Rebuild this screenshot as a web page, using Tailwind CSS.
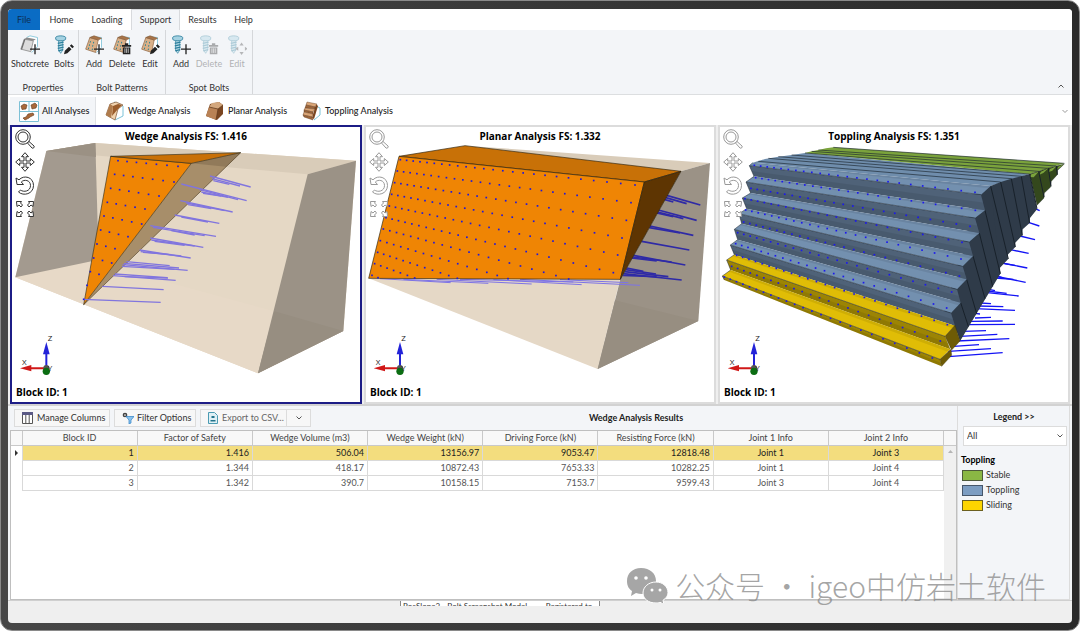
<!DOCTYPE html>
<html lang="en">
<head>
    <meta charset="UTF-8">
    <meta name="viewport" content="width=device-width, initial-scale=1.0">
    <script src="https://cdn.jsdelivr.net/npm/@tailwindcss/browser@4"></script>
    <title>RocSlope3 - Bolt Screenshot Model</title>
</head>
<body class="bg-white font-['Lato','Noto_Sans_CJK_SC',sans-serif] text-[9px] leading-[12px] text-[#333]">

<!-- ICONS -->
<svg class="hidden">
    <symbol id="i-block" viewBox="0 0 24 24">
        <path d="M9 2l12 1v12l-6 6" fill="#fff" stroke="#7cc3d8"/>
        <path d="M7 3l10 3-3 15L2 17z" fill="#d9b088" stroke="#8a5f3c" stroke-width=".8"/>
        <path d="M7 3l5-2 9 3-4 2z" fill="#a87448" stroke="#8a5f3c" stroke-width=".8"/>
        <path d="M7 8l1 .3M11 9l1 .3M6 12l1 .3M10 13l1 .3M5 16l1 .3M9.500 17l1 .3" stroke="#1e7f92" stroke-width="1.800"/>
    </symbol>
    <symbol id="i-shotcrete" viewBox="0 0 24 24">
        <path d="M8 3l4-2 9 2v11l-7 7" fill="#fff" stroke="#7cc3d8"/>
        <path d="M5 5l11 2-3 13L1 17z" fill="#dcdcdc" stroke="#777" stroke-width=".8"/>
        <path d="M5 5l3-2 11 2-3 2z" fill="#8a8a8a"/>
        <path d="M5 5L1 17l1.500.5L6.500 5.500z" fill="#6d6d6d"/>
    </symbol>
    <symbol id="i-bolt" viewBox="0 0 24 24">
        <path d="M2 3c0-1 3-2 6-2s6 1 6 2v2c0 1-3 2-6 2S2 6 2 5z" fill="#a5d2e2" stroke="#2c7f9d"/>
        <path d="M5.500 7h5v11L8 22l-2.500-4z" fill="#bfe0ea" stroke="#2c7f9d" stroke-width=".8"/>
        <path d="M4.500 10l7-1.500M4.500 13l7-1.500M4.500 16l7-1.500M5 19l6-1.500" stroke="#2c7f9d" stroke-width="1.400"/>
    </symbol>
    <symbol id="i-plus" viewBox="0 0 24 24"><path d="M18 11v12M12 17h12" stroke="#222" stroke-width="1.600"/></symbol>
    <symbol id="i-trash" viewBox="0 0 24 24">
        <path d="M12 12h11v2H12zM15.500 10h4v2h-4zM13 15h9v8h-9z" fill="#222"/>
        <path d="M15.500 16v5.500M17.500 16v5.500M19.500 16v5.500" stroke="#fff" stroke-width=".8"/>
    </symbol>
    <symbol id="i-pencil" viewBox="0 0 24 24"><path d="M12 23l1-4 5-5 3 3-5 5zM19 13l2-2 3 3-2 2z" fill="#222"/></symbol>
    <symbol id="i-arrows" viewBox="0 0 24 24">
        <path d="M17.500 9l2.500 3.500h-5zM17.500 24l2.500-3.500h-5zM10 16.500l3.500-2.500v5zM25 16.500L21.500 14v5z" fill="#444"/>
    </symbol>

    <symbol id="i-zoom" viewBox="0 0 20 20">
        <g fill="#fff" stroke="currentColor"><circle cx="8" cy="8" r="7.300"/><circle cx="8" cy="8" r="5"/>
        <path d="M12.500 14l1.500-1.500 5 4.500c1 1-1 3-2 2z"/></g>
    </symbol>
    <symbol id="i-move" viewBox="0 0 20 20">
        <path fill="#fff" stroke="currentColor" d="M10 .7l3.500 4H11V9h4.300V6.500l4 3.500-4 3.500V11H11v4.300h2.500l-3.500 4-3.500-4H9V11H4.700v2.500L.7 10l4-3.500V9H9V4.700H6.500z"/>
    </symbol>
    <symbol id="i-rotate" viewBox="0 0 20 20">
        <path fill="#fff" stroke="currentColor" d="M1 3l1 6.500h6.500L6.300 7C9 4 15.500 5 15.500 10.500c0 6-7 7-10 4.500L3.500 17c5 4.500 15 2 15-6.500C18.500 2 9-.5 4 4.800z"/>
    </symbol>
    <symbol id="i-fit" viewBox="0 0 20 20">
        <g fill="#fff" stroke="currentColor">
            <path d="M1.500 3.500h5l-1 1.500 2 2-1.500 2-2-2-2 1.500z"/>
            <path d="M18.500 3.500h-5l1 1.500-2 2 1.500 2 2-2 2 1.500z"/>
            <path d="M1.500 18.500h5l-1-1.500 2-2-1.500-2-2 2-2-1.500z"/>
            <path d="M18.500 18.500h-5l1-1.500-2-2 1.500-2 2 2 2-1.500z"/>
        </g>
    </symbol>
    <symbol id="i-axes" viewBox="0 0 130 150">
        <path d="M84 112V50" stroke="#2323d8" stroke-width="6"/><path d="M84 24l10 37H74z" fill="#2323d8"/>
        <path d="M82 103H36" stroke="#d01818" stroke-width="6"/><path d="M5 103l34-10v19z" fill="#d01818"/>
        <circle cx="84" cy="102" r="9" fill="#555"/><circle cx="84" cy="112" r="11" fill="#0b6d12"/>
        <g fill="#222" font-size="24"><text x="88" y="20">Z</text><text x="11" y="93">X</text><text x="88" y="112">Y</text></g>
    </symbol>
</svg>

<div class="min-h-screen flex flex-col rounded-xl bg-linear-to-r from-[#474747] to-[#2a2a2a] border border-[#8a8a8a] px-[7px] pt-2 pb-[7px]">
<div class="grow flex flex-col rounded-sm overflow-hidden bg-[#efefef]">

    <!-- RIBBON -->
    <nav class="h-[21px] flex bg-white">
        <button class="w-8 bg-[#0a6cc4] text-[#0c2f55]">File</button>
        <button class="w-[43px]">Home</button>
        <button class="w-[48px]">Loading</button>
        <button class="w-[49px] bg-[#f3f5f8] border border-b-0 border-[#d8dadd]">Support</button>
        <button class="w-[45px]">Results</button>
        <button class="w-[37px]">Help</button>
    </nav>
    <div class="flex h-[65px] bg-[#f3f5f8] border-b border-[#dcdee0]">
        <section class="flex flex-col justify-between border-r border-[#d5d7da] px-px pt-[5px]">
            <div class="flex">
                <button class="w-[42px] flex flex-col items-center gap-[3px]">
                    <svg class="size-5"><use href="#i-shotcrete"/><use href="#i-plus"/></svg>Shotcrete</button>
                <button class="w-[26px] flex flex-col items-center gap-[3px]">
                    <svg class="size-5"><use href="#i-bolt"/><use href="#i-pencil"/></svg>Bolts</button>
            </div>
            <h2 class="text-center">Properties</h2>
        </section>
        <section class="flex flex-col justify-between border-r border-[#d5d7da] px-px pt-[5px]">
            <div class="flex">
                <button class="w-7 flex flex-col items-center gap-[3px]">
                    <svg class="size-5"><use href="#i-block"/><use href="#i-plus"/></svg>Add</button>
                <button class="w-7 flex flex-col items-center gap-[3px]">
                    <svg class="size-5"><use href="#i-block"/><use href="#i-trash"/></svg>Delete</button>
                <button class="w-7 flex flex-col items-center gap-[3px]">
                    <svg class="size-5"><use href="#i-block"/><use href="#i-pencil"/></svg>Edit</button>
            </div>
            <h2 class="text-center">Bolt Patterns</h2>
        </section>
        <section class="flex flex-col justify-between border-r border-[#d5d7da] px-px pt-[5px]">
            <div class="flex">
                <button class="w-7 flex flex-col items-center gap-[3px]">
                    <svg class="size-5"><use href="#i-bolt"/><use href="#i-plus"/></svg>Add</button>
                <button disabled class="w-7 flex flex-col items-center gap-[3px] opacity-35">
                    <svg class="size-5"><use href="#i-bolt"/><use href="#i-trash"/></svg>Delete</button>
                <button disabled class="w-7 flex flex-col items-center gap-[3px] opacity-35">
                    <svg class="size-5"><use href="#i-bolt"/><use href="#i-arrows"/></svg>Edit</button>
            </div>
            <h2 class="text-center">Spot Bolts</h2>
        </section>
        <button class="ml-auto self-end mr-2 mb-1" aria-label="Collapse ribbon">
            <svg class="w-[6px] h-2" viewBox="0 0 6 8" fill="none" stroke="#555"><path d="M.5 5.500L3 3l2.500 2.500"/></svg></button>
    </div>

    <!-- ANALYSIS TABS -->
    <div class="flex items-stretch h-[30px] bg-white pl-[2px] pt-px font-medium text-[#222]">
        <button class="w-[86px] flex items-center gap-[3px] pl-[9px] mt-px bg-[#f3f5f8] border-r border-[#dfe1e4] whitespace-nowrap">
            <svg class="w-5 h-[21px]" viewBox="0 0 20 21">
                <path d="M.5.5h19v20H.500zM.5 10.500h19M10 .5v10" fill="#fff" stroke="#7cc0d6"/>
                <path d="M2 5l3-2 3 1-1 4-4 .5zM12 4l4-2 2 2-1 3-4 1zM4 17l3-1 2-3 5-1 1 2-4 2-1 1-4 2z" fill="#a9683a" stroke="#5f3a1e" stroke-width=".6"/>
            </svg>All Analyses</button>
        <button class="w-[100px] flex items-center gap-1 pl-[9px] whitespace-nowrap">
            <svg class="w-[19px] h-5" viewBox="0 0 19 20">
                <path d="M9 1l9 4v10l-8 4" fill="#fff" stroke="#7cc3d8"/>
                <path d="M5 3l6-2 7 3-5 4-3 11-9-5z" fill="#f0d2ae" stroke="#7b5332" stroke-width=".7"/>
                <path d="M5 3l3 2-2 12-5-3z" fill="#b07c4d"/><path d="M8 5l5-2 4 1-4 4-6 7z" fill="#9a5c2b"/>
            </svg>Wedge Analysis</button>
        <button class="w-[97px] flex items-center gap-1 pl-[9px] whitespace-nowrap">
            <svg class="w-[19px] h-5" viewBox="0 0 19 20">
                <path d="M5 3l9-2 4 3v9l-6 6-11-4z" fill="#7a4621"/><path d="M4 6l9 2-2 11L1 15z" fill="#b98255"/>
                <path d="M4 6l3-4 7-1 4 3-5 4z" fill="#d3a77d"/><path d="M13 8L11 19M13 8l5-4M4 6l9 2" stroke="#5f3a1e" stroke-width=".7"/>
            </svg>Planar Analysis</button>
        <button class="w-[106px] flex items-center gap-1 pl-[9px] whitespace-nowrap">
            <svg class="w-[19px] h-5" viewBox="0 0 19 20">
                <path d="M14 5l4 2v7l-6 5" fill="#fff" stroke="#7cc3d8"/>
                <path d="M14 3l2 2-4 13-2-1z" fill="#7a4621"/>
                <g fill="#d9a577" stroke="#5f3a1e" stroke-width=".4"><path d="M5 1l10 2-2 3-9-2z"/><path d="M4 4l9 2v2L3 7z" fill="#9c663b"/>
                <path d="M3 7l10 1-2 3-9-2z"/><path d="M2 9l9 2v2l-9-2z" fill="#9c663b"/><path d="M2 11l9 2-1 3-9-2z"/><path d="M1 14l9 2 1 3-9-3z" fill="#9c663b"/></g>
            </svg>Toppling Analysis</button>
        <button class="ml-auto mr-1" aria-label="More tabs">
            <svg class="w-[6px] h-2" viewBox="0 0 6 8" fill="none" stroke="#999"><path d="M.5 3L3 5.500 5.500 3"/></svg></button>
    </div>

    <!-- VIEWPORTS -->
    <main class="grid grid-cols-3 gap-[2px] px-[2px] bg-[#efefef] border-b-2 border-[#d2d2d2] font-['Open_Sans',sans-serif]">
        <section class="relative bg-white border-2 border-[#1c1c86]">
            <svg class="block w-full" viewBox="12 15 1044 825">
                <path d="M22 466L115 87l147-24 782 53-38 511-256 127z" fill="#e5d8c5"/>
                <path d="M115 87l147-24 782 53-145 41z" fill="#d9ccb9"/>
                <path d="M250 418l549 150-49 186L22 466z" fill="#e7d9c7"/>
                <path d="M22 466L115 87l147-24 10 350z" fill="#a39a8f"/>
                <path d="M115 87l147-24 2 42z" fill="#9b9184"/>
                <path d="M899 157l145-41-38 511-256 127z" fill="#9b9286"/>
                <path d="M799 568l207 59-256 127z" fill="#978e81"/>
                <path d="M550 124L698 92 227 548z" fill="#a78e6a"/>
                <path d="M550 124l148-32-44 42z" fill="#917a5a"/>
                <g stroke="#3a3320" stroke-width="2"><path d="M308 103l242 21-323 424z" fill="#ef8504"/><path d="M308 103l390-11-148 32z" fill="#c97006"/></g>
                <path d="M698 92L227 548" stroke="#57492f" stroke-width="2"/>
                <g id="wedge-bolts" stroke="#8175de" stroke-width="4"></g>
                <g id="wedge-dots" fill="#1b17e0"></g>
                <use href="#i-axes" x="31" y="636" width="130" height="150"/>
            </svg>
            <h2 class="absolute inset-x-0 top-[3px] text-center text-[10px] font-bold text-black">Wedge Analysis FS: 1.416</h2>
            <div class="absolute left-[3px] top-[2px] flex flex-col gap-[3px] text-[#333]">
                <button aria-label="Zoom"><svg class="block size-5"><use href="#i-zoom"/></svg></button>
                <button aria-label="Pan"><svg class="block size-5"><use href="#i-move"/></svg></button>
                <button aria-label="Rotate"><svg class="block size-5"><use href="#i-rotate"/></svg></button>
                <button aria-label="Zoom extents"><svg class="block size-5"><use href="#i-fit"/></svg></button>
            </div>
            <p class="absolute left-1 bottom-1 text-[10px] font-bold text-black">Block ID: 1</p>
        </section>
        <section class="relative bg-white border-2 border-[#dcdcdc]">
            <svg class="block w-full" viewBox="18 15 1044 825">
                <path d="M315 71l735 52-87 25z" fill="#d9ccb9"/>
                <path d="M26 469h755l-68 272z" fill="#e5d8c6"/>
                <path d="M963 148l87-25-35 474-302 144 68-269z" fill="#9b9286"/>
                <path d="M765 535l250 62-302 144z" fill="#978e81"/>
                <g id="planar-bolts-back" stroke="#7d73e6" stroke-width="3"></g>
                <g id="planar-bolts" stroke="#2f2aa6" stroke-width="5"></g>
                <g stroke="#2e2410" stroke-width="2">
                    <path d="M117 103l198-32 648 77-110 32z" fill="#c87107"/>
                    <path d="M117 103l736 77-72 292-755-3z" fill="#ef8504"/>
                    <path d="M853 180l110-32-182 324z" fill="#5e3502"/>
                </g>
                <g id="planar-dots" fill="#1b17e0"></g>
                <use href="#i-axes" x="36" y="636" width="130" height="150"/>
            </svg>
            <h2 class="absolute inset-x-0 top-[3px] text-center text-[10px] font-bold text-black">Planar Analysis FS: 1.332</h2>
            <div class="absolute left-[3px] top-[2px] flex flex-col gap-[3px] text-[#999]">
                <button aria-label="Zoom"><svg class="block size-5"><use href="#i-zoom"/></svg></button>
                <button aria-label="Pan"><svg class="block size-5"><use href="#i-move"/></svg></button>
                <button aria-label="Rotate"><svg class="block size-5"><use href="#i-rotate"/></svg></button>
                <button aria-label="Zoom extents"><svg class="block size-5"><use href="#i-fit"/></svg></button>
            </div>
            <p class="absolute left-1 bottom-1 text-[10px] font-bold text-black">Block ID: 1</p>
        </section>
        <section class="relative bg-white border-2 border-[#dcdcdc]">
            <svg class="block w-full" viewBox="15 15 1044 825">
                <g id="toppling-bolts" stroke="#1414f5" stroke-width="4"></g>
                <path d="M113 122l37-11 40-7 40-5 40-6 674 63-117 36z" fill="#6f8dac"/>
                <path d="M270 93l20-5 20-4 23-5 22-3 693 48-104 32z" fill="#7ba33c"/>
                <g id="toppling-strips" stroke="#1d2730" stroke-width="2" fill="none"></g>
                <!-- side faces -->
                <path d="M827 192l30-12 32-10 30-7 25-7 22 106-21 26-1 15-21 19-1 18-21 22v13l-23 23 1 14-24 25 1 18-23 25v13l-24 22 1 15-25 22v23l-24 25-1 13-26 28-45-67-2-17 29-31-10-40 29-30-11-38 29-32-12-40 28-30-13-46 29-22-12-47z" fill="#2f3b49"/>
                <path d="M827 192L798 218 812 265 780 288 793 333 762 360 774 402 743 433 755 472 726 502 737 542 708 573 720 611 735 658 856 455z" fill="#2f3b49"/>
                <path d="M944 156l27-8 29-10 24-6 24-6-20 19-1 13-18 20-2 17-19 18-1 15-21 22z" fill="#34481d" stroke="#1d2730" stroke-width="1"/>
                <path d="M944 165l5-8 22-8-15 17zM973 158l5-9 22-10-15 14zM1001 150l4-9 19-8-12 13zM1026 143l4-9 18-9z" fill="#7ba33c"/>
                <g id="toppling-edges" stroke="#18212a" stroke-width="3"></g>
                <g id="toppling-layers"></g>
                <path d="M690 643l30-33 15 47-25 27z" fill="#6e5b05" stroke="#2c2503" stroke-width="1"/>
                <path d="M675 712l33-30 2 18-30 33z" fill="#6e5b05" stroke="#2c2503" stroke-width="1"/>
                <g id="toppling-dots" fill="#1b17f0"></g>
                <use href="#i-axes" x="33" y="636" width="130" height="150"/>
            </svg>
            <h2 class="absolute inset-x-0 top-[3px] text-center text-[10px] font-bold text-black">Toppling Analysis FS: 1.351</h2>
            <div class="absolute left-[3px] top-[2px] flex flex-col gap-[3px] text-[#999]">
                <button aria-label="Zoom"><svg class="block size-5"><use href="#i-zoom"/></svg></button>
                <button aria-label="Pan"><svg class="block size-5"><use href="#i-move"/></svg></button>
                <button aria-label="Rotate"><svg class="block size-5"><use href="#i-rotate"/></svg></button>
                <button aria-label="Zoom extents"><svg class="block size-5"><use href="#i-fit"/></svg></button>
            </div>
            <p class="absolute left-1 bottom-1 text-[10px] font-bold text-black">Block ID: 1</p>
        </section>
    </main>

    <!-- RESULTS -->
    <div class="grow flex px-[2px] bg-[#f3f5f8]">
        <div class="grow flex flex-col">
            <div class="flex items-center gap-1 h-6 pl-1">
                <button class="h-[18px] w-24 shrink-0 flex items-center gap-1 pl-[7px] border border-[#dcdcdc] bg-[#f7f7f7] whitespace-nowrap">
                    <svg class="w-[11px] h-3 shrink-0" viewBox="0 0 11 12"><path d="M.5.500h10v11H.500zM3.800 0v12M7.200 0v12" fill="#fff" stroke="#555"/><path d="M0 0h11v3H0z" fill="#5b5a86"/></svg>
                    Manage Columns</button>
                <button class="h-[18px] w-[82px] shrink-0 flex items-center gap-[3px] pl-[7px] border border-[#dcdcdc] bg-[#f7f7f7] whitespace-nowrap">
                    <svg class="size-3 shrink-0" viewBox="0 0 12 12"><circle cx="3" cy="3" r="1.600" fill="none" stroke="#444" stroke-width="1.500"/><path d="M4 4.500h8L9 8v3l-2 1V8z" fill="#8cc4ee" stroke="#2d7fc4" stroke-width=".7"/></svg>
                    Filter Options</button>
                <div class="flex shrink-0 border border-[#dcdcdc] bg-[#f7f7f7] h-[18px] text-[#666]">
                    <button class="w-[85px] flex items-center gap-1 pl-[7px] whitespace-nowrap">
                        <svg class="w-[10px] h-3 shrink-0" viewBox="0 0 10 12"><path d="M.5.500h6l3 3v8h-9z" fill="#dff0f5" stroke="#4b9bb2"/><path d="M3.500 4h3v2h-3zM2.500 8h5v1.500h-5z" fill="#23748c"/></svg>
                        Export to CSV...</button>
                    <button class="w-6 flex items-center justify-center border-l border-[#dcdcdc]" aria-label="Export options">
                        <svg class="w-[6px] h-2" viewBox="0 0 6 8" fill="none" stroke="#555"><path d="M.5 2.500L3 5l2.500-2.500"/></svg></button>
                </div>
                <h2 class="grow text-center font-bold text-[#222]">Wedge Analysis Results</h2>
            </div>
            <div class="grow flex bg-white border border-[#bfbfbf]">
                <div class="grow">
                    <table class="w-full table-fixed border-collapse leading-[14px] text-[#555]">
                        <thead>
                            <tr class="h-[14px] bg-[#f8f8f8] text-[#444]">
                                <th class="w-[11px] p-0 border-r border-b border-[#c9c9c9]"></th>
                                <th class="p-0 font-normal border-r border-b border-[#c9c9c9]">Block ID</th>
                                <th class="p-0 font-normal border-r border-b border-[#c9c9c9]">Factor of Safety</th>
                                <th class="p-0 font-normal border-r border-b border-[#c9c9c9]">Wedge Volume (m3)</th>
                                <th class="p-0 font-normal border-r border-b border-[#c9c9c9]">Wedge Weight (kN)</th>
                                <th class="p-0 font-normal border-r border-b border-[#c9c9c9]">Driving Force (kN)</th>
                                <th class="p-0 font-normal border-r border-b border-[#c9c9c9]">Resisting Force (kN)</th>
                                <th class="p-0 font-normal border-r border-b border-[#c9c9c9]">Joint 1 Info</th>
                                <th class="p-0 font-normal border-r border-b border-[#c9c9c9]">Joint 2 Info</th>
                            </tr>
                        </thead>
                        <tbody id="results"></tbody>
                    </table>
                </div>
                <div class="w-3 shrink-0 bg-[#f0f0f0]">
                    <div class="h-[15px] bg-[#f8f8f8] border-b border-[#c9c9c9]"></div>
                    <svg class="mx-auto mt-1 w-[5px] h-[3px]" viewBox="0 0 5 3"><path d="M2.500 0L5 3H0z" fill="#b5b5b5"/></svg>
                </div>
            </div>
        </div>
        <aside class="w-[113px] shrink-0 pl-[3px] pr-[2px] border border-t-0 border-[#dcdcdc] text-[#333]">
            <h2 class="pt-[5px] text-center font-bold text-[#222]">Legend &gt;&gt;</h2>
            <div class="relative mt-[3px] ml-[2px]">
                <select aria-label="Legend filter" class="block appearance-none w-full h-5 pl-[3px] bg-white border border-[#dcdcdc]">
                    <option>All</option>
                </select>
                <svg class="absolute right-1 top-[6px] w-[6px] h-2" viewBox="0 0 6 8" fill="none" stroke="#555"><path d="M.5 2.500L3 5l2.500-2.500"/></svg>
            </div>
            <h3 class="mt-2 font-bold text-black">Toppling</h3>
            <ul class="mt-[3px] ml-px flex flex-col gap-[3px]">
                <li class="flex items-center gap-[3px]"><span class="w-[21px] h-[11px] bg-[#8ab744] border border-[#4d5a3a]"></span>Stable</li>
                <li class="flex items-center gap-[3px]"><span class="w-[21px] h-[11px] bg-[#7c9dc2] border border-[#46566a]"></span>Toppling</li>
                <li class="flex items-center gap-[3px]"><span class="w-[21px] h-[11px] bg-[#fdd500] border border-[#6b6020]"></span>Sliding</li>
            </ul>
        </aside>
    </div>
    <footer class="h-[23px] flex justify-center border-t border-[#cfcfcf]">
        <p class="w-[200px] -ml-20 h-[5px] overflow-hidden whitespace-nowrap px-[2px] bg-white border-x border-[#888] text-[8px] leading-[10px]">RocSlope3 - Bolt Screenshot Model &nbsp; — &nbsp; Registered to</p>
    </footer>
</div>
</div>

<!-- WATERMARK -->
<div class="absolute right-[34px] bottom-[26px] flex items-center gap-[6px] text-[30px] leading-[40px] font-light text-[#888]/75 whitespace-nowrap pointer-events-none">
    <svg class="w-[43px] h-[36px]" viewBox="0 0 43 36" fill="#a6a6a6">
        <path d="M15 1C6.500 1 1 6.500 1 14c0 5 2 8 5 10l-1 5 5-3c2 .7 4 1 6 1 8 0 14-5.500 14-13S24 1 15 1z"/>
        <path d="M30 15c-7.500 0-13 5-13 11s5.500 10 13 10c2 0 3-.3 4-.7l4 2-1-4c3-2 5-4.500 5-7.500 0-6-5-10.800-12-10.800z" stroke="#fff"/>
        <g fill="#fff"><circle cx="10" cy="11" r="1.800"/><circle cx="20" cy="11" r="1.800"/><circle cx="26" cy="23" r="1.500"/><circle cx="34" cy="23" r="1.500"/></g>
    </svg>
    <span class="font-['Noto_Sans_CJK_SC',sans-serif]">公众号 · igeo中仿岩土软件</span>
</div>

<script>
    // Bolt heads: [x1, y1, x2, y2, count], spacing grows by `ratio` towards the viewer
    function drawDots(id, rows, ratio) {
        let html = '';
        for (const [x1, y1, x2, y2, n] of rows) {
            for (let k = 0; k < n; k++) {
                let t = 0;
                if (n > 1)
                    t = (Math.pow(ratio, k) - 1) / (Math.pow(ratio, n - 1) - 1);
                html += `<rect x="${x1 + (x2 - x1) * t - 2.5}" y="${y1 + (y2 - y1) * t - 2.5}" width="5" height="5"/>`;
            }
        }
        document.getElementById(id).innerHTML = html;
    }

    function drawLines(id, lines) {
        document.getElementById(id).innerHTML = lines.map(([a, b, c, d]) => `<path d="M${a} ${b}L${c} ${d}"/>`).join('');
    }

    drawDots('wedge-dots', [
        [330, 116, 510, 133, 7], [320, 157, 498, 180, 7], [308, 199, 453, 222, 6], [298, 241, 411, 261, 5],
        [288, 282, 401, 306, 5], [278, 324, 360, 344, 4], [267, 366, 321, 380, 3], [257, 408, 311, 423, 3],
        [247, 449, 273, 457, 2], [237, 490, 237, 490, 1], [227, 532, 227, 532, 1],
    ], 1.04);
    drawLines('wedge-bolts', [
        [606, 162, 728, 195], [612, 170, 696, 192], [616, 176, 664, 187],
        [520, 186, 716, 236], [575, 203, 690, 233], [580, 210, 660, 226], [585, 214, 640, 222],
        [517, 236, 674, 270], [535, 243, 650, 266], [540, 248, 610, 260],
        [500, 279, 634, 304], [520, 285, 600, 300],
        [427, 311, 624, 343], [435, 316, 590, 341], [490, 326, 560, 339],
        [427, 348, 586, 376], [430, 354, 560, 372], [440, 358, 530, 370],
        [395, 384, 548, 408], [398, 389, 520, 402], [405, 391, 490, 398],
        [355, 419, 485, 431], [348, 424, 513, 438], [344, 428, 539, 445], [342, 433, 500, 442],
        [320, 456, 478, 467], [315, 461, 503, 475], [350, 464, 480, 468],
        [283, 493, 467, 503], [225, 532, 458, 541],
    ]);

    drawDots('planar-dots', [
        [121, 113, 825, 189, 25], [112, 147, 813, 242, 25], [104, 182, 799, 295, 25], [95, 217, 786, 348, 25],
        [88, 252, 773, 399, 25], [78, 287, 760, 452, 25], [70, 321, 626, 471, 21], [61, 356, 444, 470, 16],
        [53, 391, 292, 469, 12], [44, 425, 164, 468, 7], [36, 460, 54, 467, 2],
    ], 1.036);
    drawLines('planar-bolts', [
        [920, 220, 1021, 249], [915, 226, 980, 245], [912, 232, 940, 240],
        [895, 264, 1010, 295], [893, 270, 970, 290], [890, 273, 940, 284],
        [870, 312, 1000, 340], [868, 317, 960, 333], [845, 358, 988, 384],
        [820, 400, 976, 429], [818, 405, 935, 420], [815, 408, 890, 417],
        [800, 438, 850, 448], [797, 443, 888, 456], [794, 449, 925, 464], [790, 455, 965, 474], [788, 460, 890, 464],
    ]);
    drawLines('planar-bolts-back', [
        [60, 470, 272, 482], [130, 472, 385, 484], [230, 472, 515, 486], [400, 473, 665, 488],
        [480, 472, 840, 490], [600, 473, 805, 482], [300, 472, 640, 480],
    ]);

    // Toppling columns: left [xTop, yTop, xMid, yMid, xBottom, yBottom], then right
    const layers = [
        [113, 122, 103, 131, 117, 163, 827, 192, 798, 218, 810, 265],
        [117, 163, 93, 180, 107, 213, 810, 265, 780, 288, 793, 333],
        [107, 213, 82, 228, 95, 260, 793, 333, 762, 360, 774, 402],
        [95, 260, 72, 275, 80, 305, 774, 402, 743, 433, 755, 472],
        [80, 305, 58, 322, 68, 353, 755, 472, 726, 502, 737, 542],
        [68, 353, 46, 369, 58, 398, 737, 542, 708, 573, 720, 611],
        [58, 398, 35, 414, 47, 444, 720, 611, 690, 643, 706, 682],
        [47, 444, 22, 462, 28, 474, 706, 682, 675, 712, 680, 733],
    ];
    document.getElementById('toppling-layers').innerHTML = layers.map((p, i) => {
        const top = i < 6 ? '#7390af' : '#e0bd06';
        const front = i < 6 ? '#4f6278' : '#9c8404';
        const [a, b, c, d, e, f, g, h, j, k, l, m] = p;
        return `<path d="M${a} ${b}L${g} ${h}L${j} ${k}L${c} ${d}z" fill="${top}"/>
            <path d="M${a} ${b}L${g} ${h}L${(3 * g + j) / 4} ${(3 * h + k) / 4}L${(3 * a + c) / 4} ${(3 * b + d) / 4}z" fill="#000" fill-opacity=".08"/>
            <path d="M${c} ${d}L${j} ${k}L${l} ${m}L${e} ${f}z" fill="${front}"/>
            <path d="M${(c + e) / 2} ${(d + f) / 2}L${(j + l) / 2} ${(k + m) / 2}L${l} ${m}L${e} ${f}z" fill="#000" fill-opacity=".08"/>
            <path d="M${a} ${b}L${c} ${d}L${e} ${f}M${c} ${d}L${j} ${k}" fill="none" stroke="#1d2730" stroke-width="1.5"/>`;
    }).join('');
    drawLines('toppling-strips', [
        [130, 118, 857, 180], [160, 109, 889, 170], [190, 104, 919, 163], [230, 99, 944, 156],
        [270, 93, 971, 148], [290, 88, 1000, 139], [310, 84, 1024, 132], [355, 76, 1048, 124],
    ]);
    drawLines('toppling-edges', [
        [827, 192, 880, 411], [857, 180, 901, 375], [889, 170, 922, 340], [919, 163, 944, 303], [944, 156, 966, 260],
        [971, 148, 987, 225], [1000, 139, 1008, 193], [1024, 132, 1027, 158],
        [810, 265, 856, 455], [793, 333, 833, 493], [774, 402, 810, 530], [755, 472, 785, 575], [737, 542, 760, 613],
    ]);
    drawDots('toppling-dots', [
        [118, 130, 780, 211, 24], [122, 167, 781, 265, 24], [108, 199, 765, 313, 24], [90, 230, 741, 361, 24],
        [92, 264, 738, 411, 24], [86, 300, 733, 462, 24], [68, 332, 710, 510, 24], [62, 365, 695, 558, 24],
        [65, 400, 697, 608, 24], [50, 433, 676, 657, 24], [28, 465, 652, 708, 24],
    ], 1.036);
    drawLines('toppling-bolts', [
        [960, 260, 974, 266], [940, 301, 973, 312], [915, 342, 960, 353], [886, 383, 941, 394], [860, 423, 937, 438],
        [870, 425, 900, 430], [838, 462, 932, 481], [840, 468, 895, 472], [843, 462, 860, 466], [810, 511, 911, 522],
        [815, 507, 875, 514], [815, 501, 840, 506], [780, 560, 900, 565], [790, 552, 865, 554], [795, 543, 828, 545],
        [755, 608, 900, 607], [765, 598, 863, 597], [780, 588, 828, 586], [780, 574, 795, 576], [735, 643, 847, 637],
        [745, 628, 813, 626], [725, 657, 883, 650], [705, 674, 792, 668], [700, 688, 828, 680], [700, 704, 863, 692],
    ]);

    const results = [
        ['1', '1.416', '506.04', '13156.97', '9053.47', '12818.48', 'Joint 1', 'Joint 3'],
        ['2', '1.344', '418.17', '10872.43', '7653.33', '10282.25', 'Joint 1', 'Joint 4'],
        ['3', '1.342', '390.7', '10158.15', '7153.7', '9599.43', 'Joint 3', 'Joint 4'],
    ];
    document.getElementById('results').innerHTML = results.map((row, i) => {
        const cells = row.map((v, c) => c < 6
            ? `<td class="p-0 pr-[3px] text-right border border-[#d9d9d9]">${v}</td>`
            : `<td class="p-0 text-center border border-[#d9d9d9]">${v}</td>`);
        const mark = i == 0 ? '<svg class="ml-1 w-[3px] h-[6px]" viewBox="0 0 3 6"><path d="M0 0l3 3-3 3z" fill="#333"/></svg>' : '';
        return `<tr class="h-[15px]"><td class="p-0 bg-white">${mark}</td>${cells.join('')}</tr>`;
    }).join('');
    document.querySelector('#results tr').classList.add('bg-[#f3dd7e]', 'text-[#222]');
</script>
</body>
</html>
